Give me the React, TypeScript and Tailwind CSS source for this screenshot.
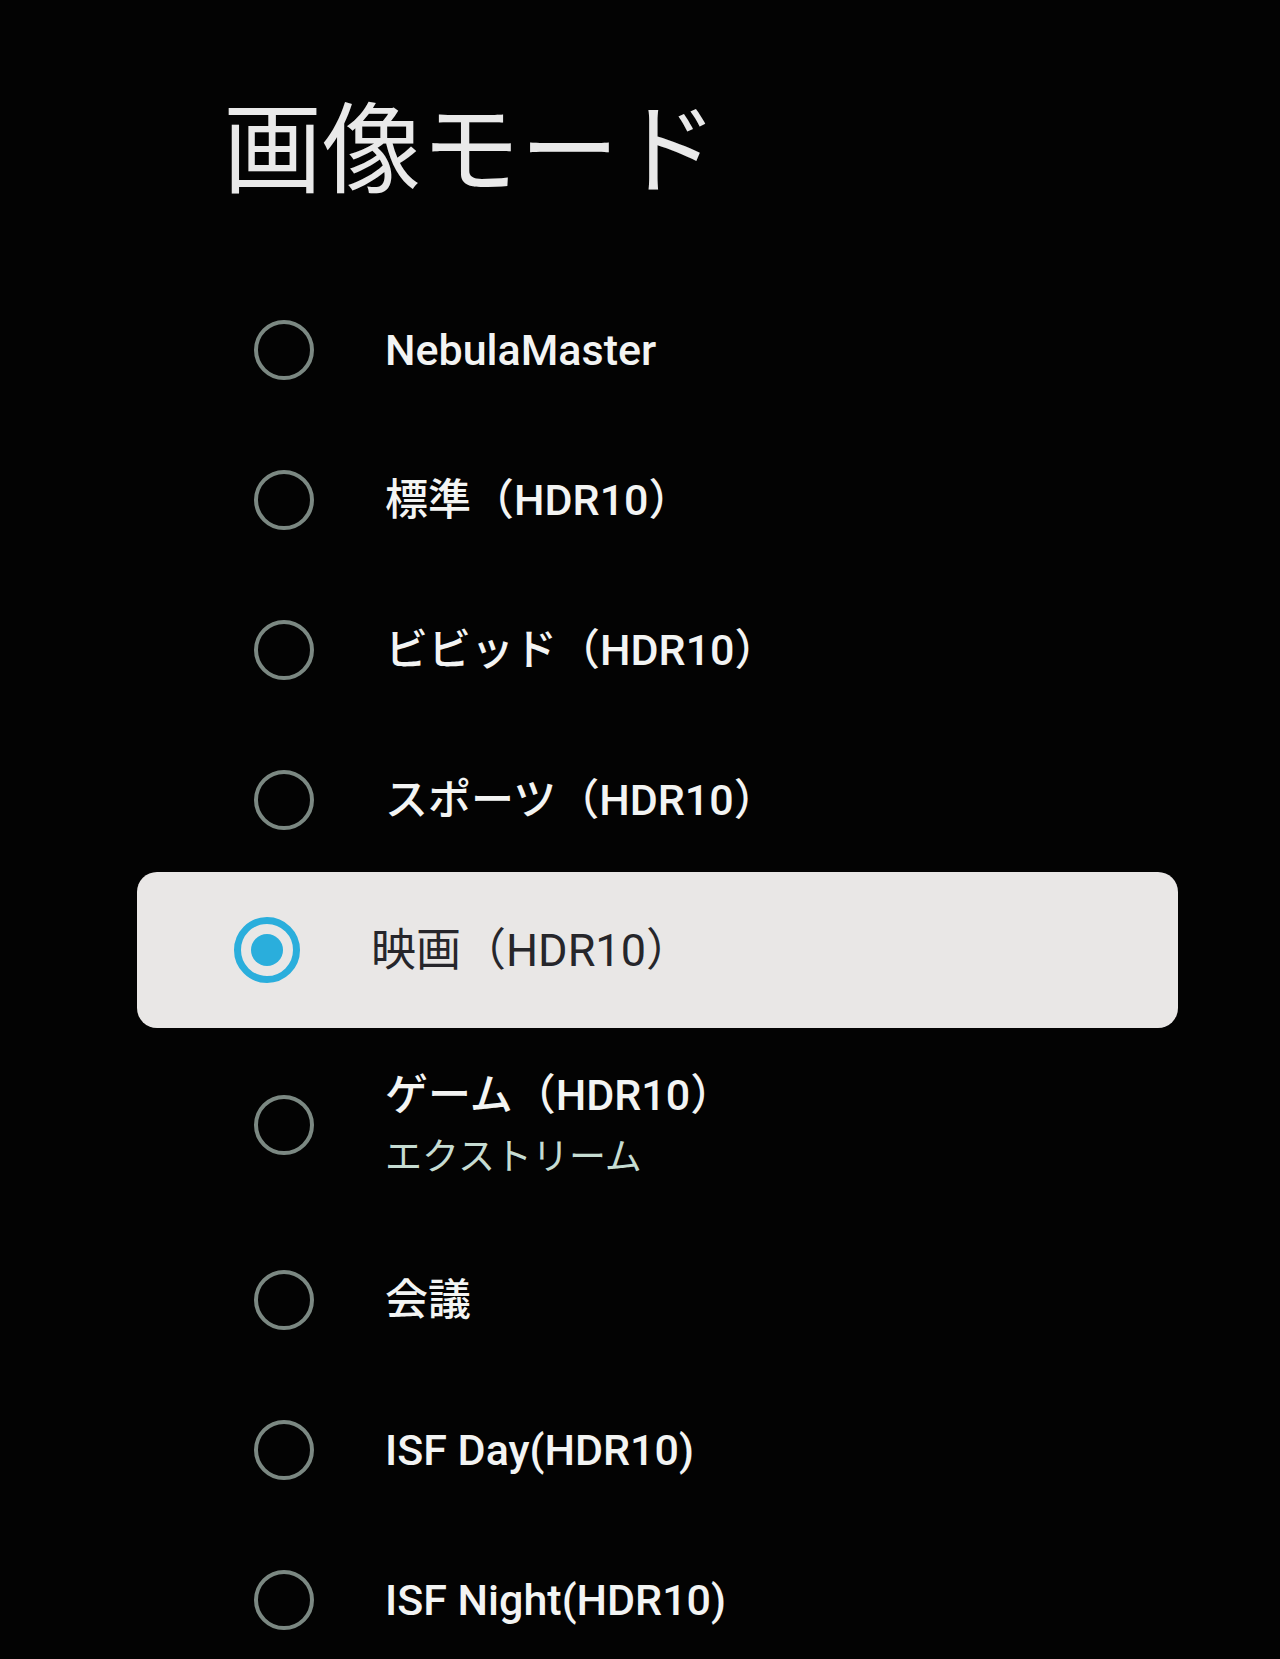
import React from 'react';

interface PictureMode {
  label: string;
  sub?: string;
}

const modes: PictureMode[] = [
  { label: 'NebulaMaster' },
  { label: '標準（HDR10）' },
  { label: 'ビビッド（HDR10）' },
  { label: 'スポーツ（HDR10）' },
  { label: '映画（HDR10）' },
  { label: 'ゲーム（HDR10）', sub: 'エクストリーム' },
  { label: '会議' },
  { label: 'ISF Day(HDR10)' },
  { label: 'ISF Night(HDR10)' },
];

const SELECTED = 4;

const font = { fontFamily: '"Roboto", "Noto Sans CJK JP", sans-serif' };

const Radio: React.FC<{ checked: boolean }> = ({ checked }) =>
  checked ? (
    <div className="w-[66px] h-[66px] shrink-0 rounded-full border-[7px] border-[#2aaedc] flex items-center justify-center">
      <div className="w-[32px] h-[32px] rounded-full bg-[#2aaedc]" />
    </div>
  ) : (
    <div className="w-[60px] h-[60px] shrink-0 rounded-full border-[4px] border-[#7b8882]" />
  );

const App: React.FC = () => {
  return (
    <div className="w-[1280px] h-[1659px] overflow-hidden bg-[#030303]" style={font}>
      <div className="pt-[76px]">
        <h1 className="h-[150px] pl-[223px] flex items-center text-[99px] leading-none font-normal text-[#e9e9e9]">
          画像モード
        </h1>

        <ul className="mt-[49px]">
          {modes.map((m, i) =>
            i === SELECTED ? (
              <li key={m.label} className="h-[150px] flex items-center">
                <div className="ml-[137px] w-[1041px] h-[156px] shrink-0 rounded-[20px] bg-[#e9e7e6] flex items-center pl-[97px] gap-[71px]">
                  <Radio checked />
                  <span className="text-[45px] leading-none text-[#26262b]">{m.label}</span>
                </div>
              </li>
            ) : (
              <li
                key={m.label}
                className={`${m.sub ? 'h-[200px]' : 'h-[150px]'} flex items-center pl-[254px] gap-[71px]`}
              >
                <Radio checked={false} />
                <div className="flex flex-col">
                  <span className="text-[43px] leading-[54px] font-medium text-[#f3f4f3]">{m.label}</span>
                  {m.sub && (
                    <span className="text-[37px] leading-[48px] mt-[12px] text-[#c6dcd2]">{m.sub}</span>
                  )}
                </div>
              </li>
            )
          )}
        </ul>
      </div>
    </div>
  );
};

export default App;
